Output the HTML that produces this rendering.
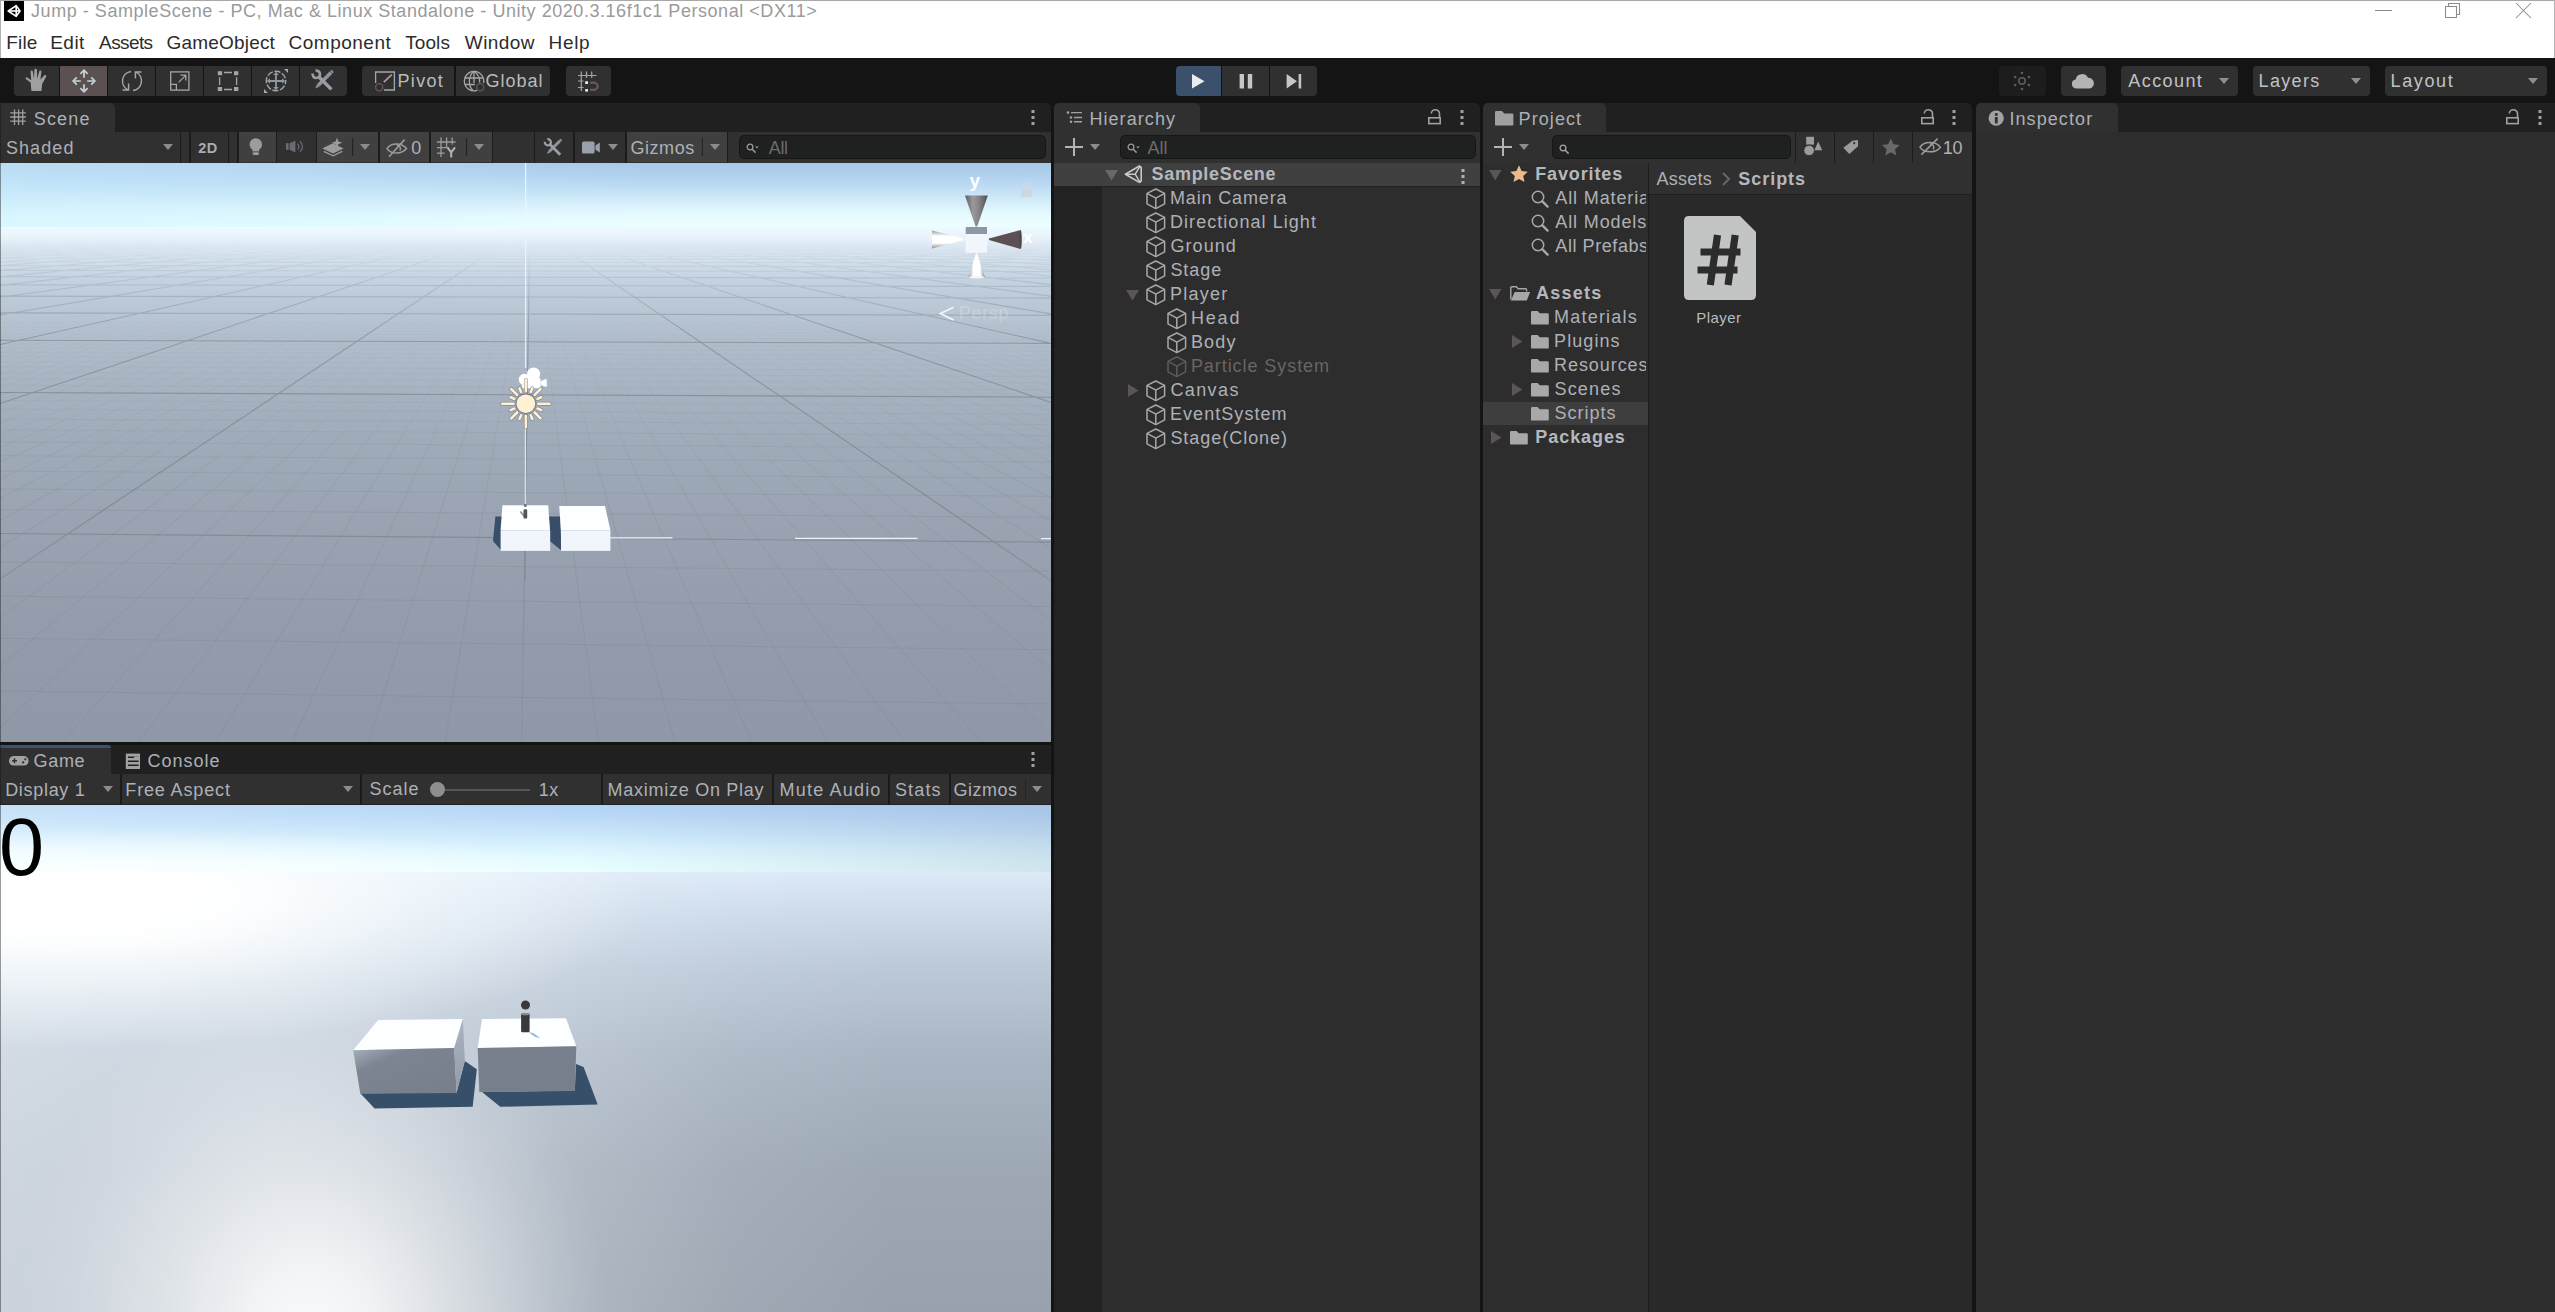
<!DOCTYPE html>
<html><head><meta charset="utf-8"><title>Unity</title>
<style>
*{box-sizing:border-box;margin:0;padding:0}
html,body{width:2555px;height:1312px;overflow:hidden;background:#141414}
body{font-family:"Liberation Sans",sans-serif;font-size:18px;color:#adb1b7;position:relative;letter-spacing:.85px}
.a{position:absolute}
.t{position:absolute;white-space:pre;line-height:24px;height:24px}
.b{font-weight:bold;letter-spacing:.55px}
svg{position:absolute;overflow:visible}
.tab{position:absolute;background:#303030;border-radius:5px 5px 0 0;height:29px}
.strip{position:absolute;background:#202020;height:29px}
.ptb{position:absolute;background:#303030;height:31px}
.btn{position:absolute;background:#303030;height:30px;top:66px}
.sep{position:absolute;width:1px;background:#1b1b1b}
.search{position:absolute;background:#1f2020;border:1px solid #161616;border-radius:5px;height:24px}
</style></head><body>
<div class="a" style="left:0px;top:0px;width:2555px;height:58px;background:#fff;"></div>
<div class="a" style="left:0px;top:0px;width:2555px;height:1px;background:#a8a8a8;"></div>
<div class="a" style="left:0px;top:0px;width:1px;height:58px;background:#b0b0b0;"></div>
<div class="a" style="left:2554px;top:0px;width:1px;height:58px;background:#b4b4b4;"></div>
<div class="a" style="left:4px;top:1px;width:20px;height:20px;background:#000;"></div>
<svg style="left:4px;top:1px" width="20" height="20" viewBox="0 0 20 20"><g fill="none" stroke="#fff" stroke-width="1.6" stroke-linejoin="round"><path d="M4.2 10L12.2 4.6V15.4Z"/><path d="M4.2 10H16"/><path d="M12.2 4.6L16 10L12.2 15.4"/></g></svg>
<div class="t " style="left:31.06px;top:-1px;letter-spacing:0.543px;color:#9a9a9a">Jump - SampleScene - PC, Mac &amp; Linux Standalone - Unity 2020.3.16f1c1 Personal &lt;DX11&gt;</div>
<div class="t " style="left:6.28px;top:31px;font-size:19px;letter-spacing:0.172px;color:#2c2c2c">File</div>
<div class="t " style="left:50.18px;top:31px;font-size:19px;letter-spacing:0.495px;color:#2c2c2c">Edit</div>
<div class="t " style="left:99.12px;top:31px;font-size:19px;letter-spacing:-0.616px;color:#2c2c2c">Assets</div>
<div class="t " style="left:166.6px;top:31px;font-size:19px;letter-spacing:0.178px;color:#2c2c2c">GameObject</div>
<div class="t " style="left:288.6px;top:31px;font-size:19px;letter-spacing:0.487px;color:#2c2c2c">Component</div>
<div class="t " style="left:405.24px;top:31px;font-size:19px;letter-spacing:0.081px;color:#2c2c2c">Tools</div>
<div class="t " style="left:464.84px;top:31px;font-size:19px;letter-spacing:0.423px;color:#2c2c2c">Window</div>
<div class="t " style="left:548.58px;top:31px;font-size:19px;letter-spacing:0.631px;color:#2c2c2c">Help</div>
<svg style="left:2370px;top:0px" width="170" height="24" viewBox="0 0 170 24"><g fill="none" stroke="#8c8c8c" stroke-width="1.05"><path d="M5 10.5H22"/><rect x="75.5" y="6.5" width="11" height="11"/><path d="M78.5 6.5V3.5H89.5V14.5H86.5"/><path d="M146 3L161 18M161 3L146 18"/></g></svg>
<div class="a" style="left:0px;top:58px;width:2555px;height:45px;background:#141414;"></div>
<div class="btn" style="left:14px;width:45px;background:#303030;border-radius:4px 0 0 4px;"></div>
<div class="btn" style="left:60px;width:47px;background:#5a5150;"></div>
<div class="btn" style="left:108px;width:47px;background:#303030;"></div>
<div class="btn" style="left:156px;width:47px;background:#303030;"></div>
<div class="btn" style="left:204px;width:47px;background:#303030;"></div>
<div class="btn" style="left:252px;width:47px;background:#303030;"></div>
<div class="btn" style="left:300px;width:47px;background:#303030;border-radius:0 4px 4px 0;"></div>
<svg style="left:0px;top:0px" width="700" height="110" viewBox="0 0 700 110"><g transform="translate(25,68.4)" fill="#9f9f9f"><path d="M5.6 14.0L0.8 10.6C0 9.8 1 8.4 2.2 9.2L6.2 11.8L5.6 3.4C5.5 1.9 7.6 1.7 7.9 3.2L9 10L9.4 1.6C9.5 0 11.8 0 11.9 1.6L12.2 10L14.2 3C14.6 1.6 16.7 2.1 16.4 3.6L15.4 11.2L19.2 7C20.2 5.9 21.8 7 21.1 8.3L17.2 15.6L16.4 22.6H6.4Z"/></g><g stroke="#c9d2da" stroke-width="1.7" fill="none" stroke-linecap="butt"><path d="M84 70V77.8M84 84.2V92M73 81H80.8M87.2 81H95"/><path d="M80.4 73.8L84 70.2L87.6 73.8M80.4 88.2L84 91.8L87.6 88.2M76.8 77.4L73.2 81L76.8 84.6M91.2 77.4L94.8 81L91.2 84.6"/></g><g stroke="#a4a6a9" stroke-width="1.45" fill="none"><path d="M131 71.5A9.6 9.6 0 0 0 128.2 89.8"/><path d="M133 90.5A9.6 9.6 0 0 0 135.8 72.2"/><path d="M122.5 90H128.6V83.6"/><path d="M141.5 72H135.4V78.4"/></g><g stroke="#a4a6a9" stroke-width="1.3" fill="none"><rect x="170.7" y="71.9" width="18.2" height="18.2"/><path d="M170.7 84.4H176.4V90.1"/><path d="M178.6 82.4L185.4 75.6M180.4 75.2H185.8V80.6"/></g><g fill="#a4a6a9"><rect x="217.8" y="71.2" width="4.3" height="4"/><rect x="234" y="71.2" width="4.3" height="4"/><rect x="217.8" y="87" width="4.3" height="4"/><rect x="234" y="87" width="4.3" height="4"/></g><g stroke="#a4a6a9" stroke-width="1.3"><path d="M224 72.5H232M224 89.5H232M219.6 77.3V85M236.6 77.3V85"/></g><g stroke="#a4a6a9" stroke-width="1.4" fill="none"><circle cx="276" cy="81" r="9.7" stroke-dasharray="6.2 1.6" stroke-dashoffset="3"/></g><g stroke="#8f97a3" stroke-width="1.8"><path d="M276 74V88M269 81H283"/></g><g fill="#8f97a3"><path d="M273.2 75L276 71.8L278.8 75ZM273.2 87L276 90.2L278.8 87ZM270 78.2L266.8 81L270 83.8ZM282 78.2L285.2 81L282 83.8Z"/></g><g fill="#a4a6a9"><path d="M284 69H288V73ZM264 89V93H268Z"/></g><g transform="translate(322.8,80.8) scale(.9)"><g transform="rotate(45)" fill="#8e949e"><rect x="-2" y="-13" width="4" height="20"/><path d="M-2 7H2L0 12Z"/><rect x="-2" y="-15.5" width="4" height="2" rx="1"/></g><g transform="rotate(-45)" fill="#9a9ea4"><rect x="-1.9" y="-6" width="3.8" height="19.5"/><path d="M-2.3 -13.6A4.1 4.1 0 1 0 2.3 -13.6" fill="none" stroke="#9a9ea4" stroke-width="3"/></g></g></svg>
<div class="btn" style="left:362px;width:92px;border-radius:4px 0 0 4px"></div>
<div class="btn" style="left:456px;width:94px;border-radius:0 4px 4px 0"></div>
<div class="t " style="left:397.49px;top:69px;letter-spacing:1.319px;color:#b9bbbf">Pivot</div>
<div class="t " style="left:485.6px;top:69px;letter-spacing:0.987px;color:#b9bbbf">Global</div>
<div class="btn" style="left:566px;width:45px;border-radius:4px"></div>
<svg style="left:0px;top:0px" width="700" height="110" viewBox="0 0 700 110"><g fill="none" stroke="#a6a6a6" stroke-width="1.3"><path d="M375.6 83V72H394.4V90H384"/><path d="M383.8 82.2L391.8 74.6" stroke-width="1.6"/><circle cx="379.2" cy="87.2" r="3.6" stroke="#6a5957"/></g><g fill="none" stroke="#a6a6a6" stroke-width="1.3"><path d="M477 90.4A9.7 9.7 0 1 1 483.6 83"/><path d="M474 71.3C468 76 468 86 473 90.6"/><path d="M474 71.3C479 75 480 80 479.6 82.5"/><path d="M474 71.5V83"/><path d="M464.5 78H483M464.8 84.5H475"/><circle cx="480.3" cy="87.2" r="3.6" stroke="#6a5957"/></g><g fill="none" stroke="#a6a6a6" stroke-width="1.2"><path d="M578 75.5H596.5M578 81H583.5M578 87.5H583.5M581.3 71.5V91M586.5 71.5V78M591.7 71.5V78"/></g><rect x="585.2" y="81.2" width="2.8" height="2.8" fill="#e8e8e8"/><rect x="585.2" y="89" width="2.8" height="2.6" fill="#e8e8e8"/><path d="M590 82.6H594A3.6 3.6 0 0 1 594 89.8H590" fill="none" stroke="#6a5957" stroke-width="2.2"/></svg>
<div class="btn" style="left:1176px;width:45px;background:#3b506b;border-radius:4px 0 0 4px"></div>
<div class="btn" style="left:1222px;width:47px"></div>
<div class="btn" style="left:1270px;width:47px;border-radius:0 4px 4px 0"></div>
<svg style="left:1176px;top:66px" width="141" height="30" viewBox="0 0 141 30"><path d="M16 8V22.5L28.5 15.2Z" fill="#e9eded"/><rect x="63.6" y="8" width="4.4" height="14.5" fill="#c6c6c6"/><rect x="71.8" y="8" width="4.4" height="14.5" fill="#c6c6c6"/><path d="M110.6 8V22.5L121 15.2Z" fill="#c6c6c6"/><rect x="122.6" y="8" width="2.6" height="14.5" fill="#c6c6c6"/></svg>
<div class="btn" style="left:1999px;width:47px;border-radius:4px;background:#1d1d1d"></div>
<div class="btn" style="left:2061px;width:45px;border-radius:4px"></div>
<div class="btn" style="left:2121px;width:117px;border-radius:4px"></div>
<div class="btn" style="left:2253px;width:117px;border-radius:4px"></div>
<div class="btn" style="left:2385px;width:162px;border-radius:4px"></div>
<div class="t " style="left:2128.32px;top:69px;letter-spacing:1.408px;color:#c0c2c6">Account</div>
<div class="t " style="left:2258.59px;top:69px;letter-spacing:1.323px;color:#c0c2c6">Layers</div>
<div class="t " style="left:2390.49px;top:69px;letter-spacing:1.635px;color:#c0c2c6">Layout</div>
<svg style="left:2219px;top:78px" width="10" height="6" viewBox="0 0 10 6"><path d="M0 0H10L5.0 6Z" fill="#8f8f8f"/></svg>
<svg style="left:2351px;top:78px" width="10" height="6" viewBox="0 0 10 6"><path d="M0 0H10L5.0 6Z" fill="#8f8f8f"/></svg>
<svg style="left:2528px;top:78px" width="10" height="6" viewBox="0 0 10 6"><path d="M0 0H10L5.0 6Z" fill="#8f8f8f"/></svg>
<svg style="left:0px;top:0px" width="2555" height="110" viewBox="0 0 2555 110"><circle cx="2022" cy="81" r="3.2" fill="none" stroke="#5c5c5c" stroke-width="1.6"/><circle cx="2022.0" cy="73.0" r="1.35" fill="#5c5c5c"/><circle cx="2028.9" cy="77.0" r="1.35" fill="#5c5c5c"/><circle cx="2028.9" cy="85.0" r="1.35" fill="#5c5c5c"/><circle cx="2022.0" cy="89.0" r="1.35" fill="#5c5c5c"/><circle cx="2015.1" cy="85.0" r="1.35" fill="#5c5c5c"/><circle cx="2015.1" cy="77.0" r="1.35" fill="#5c5c5c"/><path d="M2076 88.5A4.6 4.6 0 0 1 2075.6 79.4A6.6 6.6 0 0 1 2088 77.8A5.4 5.4 0 0 1 2089.4 88.5Z" fill="#b4b4b4"/></svg>
<div class="strip" style="left:0;top:103px;width:1051px;border-radius:0 5px 0 0"></div>
<div class="tab" style="left:0;top:103px;width:115px;border-radius:0 5px 0 0"></div>
<svg style="left:0px;top:100px" width="40" height="32" viewBox="0 0 40 32"><g stroke="#a0a0a0" stroke-width="1.3"><path d="M14.5 9.4V25M18.6 9.4V25M22.7 9.4V25M10.2 12.9H25.8M10.2 17H25.8M10.2 21.1H25.8"/></g></svg>
<div class="t " style="left:33.78px;top:106.5px;letter-spacing:1.159px;">Scene</div>
<svg style="left:1030.5px;top:110px" width="4" height="16" viewBox="0 0 4 16"><rect x="0.5" y="0" width="3" height="3" fill="#a0a0a0"/><rect x="0.5" y="6" width="3" height="3" fill="#a0a0a0"/><rect x="0.5" y="12" width="3" height="3" fill="#a0a0a0"/></svg>
<div class="ptb" style="left:0;top:132px;width:1051px"></div>
<div class="t " style="left:5.88px;top:135.5px;letter-spacing:1.105px;">Shaded</div>
<svg style="left:163px;top:144px" width="10" height="6" viewBox="0 0 10 6"><path d="M0 0H10L5.0 6Z" fill="#8c8c8c"/></svg>
<div class="a" style="left:180px;top:132px;width:1px;height:31px;background:#1b1b1b;"></div>
<div class="a" style="left:189px;top:132px;width:2px;height:31px;background:#1b1b1b;"></div>
<div class="a" style="left:228px;top:132px;width:1px;height:31px;background:#1b1b1b;"></div>
<div class="a" style="left:237px;top:132px;width:2px;height:31px;background:#1b1b1b;"></div>
<div class="a" style="left:239px;top:132px;width:37px;height:30px;background:#404040;"></div>
<div class="a" style="left:317px;top:132px;width:61px;height:30px;background:#404040;"></div>
<div class="a" style="left:380px;top:132px;width:49px;height:30px;background:#404040;"></div>
<div class="a" style="left:431px;top:132px;width:61px;height:30px;background:#404040;"></div>
<div class="a" style="left:627px;top:132px;width:100px;height:30px;background:#404040;"></div>
<div class="a" style="left:276px;top:132px;width:1px;height:31px;background:#1b1b1b;"></div>
<div class="a" style="left:316px;top:132px;width:1px;height:31px;background:#1b1b1b;"></div>
<div class="a" style="left:378px;top:132px;width:1px;height:31px;background:#1b1b1b;"></div>
<div class="a" style="left:379px;top:132px;width:1px;height:31px;background:#1b1b1b;"></div>
<div class="a" style="left:429px;top:132px;width:1px;height:31px;background:#1b1b1b;"></div>
<div class="a" style="left:430px;top:132px;width:1px;height:31px;background:#1b1b1b;"></div>
<div class="a" style="left:492px;top:132px;width:1px;height:31px;background:#1b1b1b;"></div>
<div class="a" style="left:534px;top:132px;width:1px;height:31px;background:#1b1b1b;"></div>
<div class="a" style="left:573px;top:132px;width:1px;height:31px;background:#1b1b1b;"></div>
<div class="a" style="left:574px;top:132px;width:1px;height:31px;background:#1b1b1b;"></div>
<div class="a" style="left:625px;top:132px;width:1px;height:31px;background:#1b1b1b;"></div>
<div class="a" style="left:626px;top:132px;width:1px;height:31px;background:#1b1b1b;"></div>
<div class="a" style="left:727px;top:132px;width:1px;height:31px;background:#1b1b1b;"></div>
<div class="t " style="left:198.36px;top:136px;font-size:14.5px;font-weight:bold;letter-spacing:0.335px;color:#a8abb0">2D</div>
<svg style="left:0px;top:0px" width="1060" height="170" viewBox="0 0 1060 170"><circle cx="255.8" cy="144.4" r="6.2" fill="#9c9c9c"/><path d="M252.4 148.6H259.2V151.4H252.4Z" fill="#9c9c9c"/><rect x="252.6" y="152.2" width="6.4" height="2.8" rx="1.3" fill="#9c9c9c"/><rect x="286" y="143.2" width="2.6" height="6.6" fill="#6c6a72"/><path d="M289.6 143.2L295.4 140.6V152.4L289.6 149.8Z" fill="#6c6a72"/><path d="M297.6 143.8A3.6 3.6 0 0 1 297.6 149.2" fill="none" stroke="#6c6a72" stroke-width="1.3"/><path d="M300 141.4A6.6 6.6 0 0 1 300 151.6" fill="none" stroke="#6c6a72" stroke-width="1.3"/><path d="M323.8 148.4L333 144L342.2 148.4L333 152.8Z" fill="#9c9c9c" stroke="#9c9c9c" stroke-width="1.2"/><path d="M323.8 151.4L333 155.8L342.2 151.4" fill="none" stroke="#9c9c9c" stroke-width="1.4"/><path d="M337 137.6L338.4 141.4L342.2 142.8L338.4 144.2L337 148L335.6 144.2L331.8 142.8L335.6 141.4Z" fill="#9c9c9c"/><path d="M352.6 138V156" stroke="#242424" stroke-width="1.2"/><path d="M387 148.6C391 142.6 401.6 142.6 406.6 148.6C401.6 154.6 391 154.6 387 148.6Z" fill="none" stroke="#9c9c9c" stroke-width="1.5"/><path d="M389 156.8L404.6 139.6" stroke="#9c9c9c" stroke-width="1.6"/><path d="M396.6 145.4A3.3 3.3 0 0 1 399.8 150.6" fill="none" stroke="#9c9c9c" stroke-width="1.4"/><g stroke="#9c9c9c" stroke-width="1.3" fill="none"><path d="M437 142H455.6M437 147.6H447M437 153.2H444.6M441 137.6V157M446.6 137.6V148M452.2 137.6V144.4"/></g><path d="M447.4 147.4L451.2 152.4L455 147.4M451.2 152.4V157.4" fill="none" stroke="#b4b4b4" stroke-width="2"/><path d="M466.5 138V156" stroke="#242424" stroke-width="1.2"/><g transform="translate(553.2,147.6) scale(.74)"><g transform="rotate(45)" fill="#8e949e"><rect x="-2" y="-13" width="4" height="20"/><path d="M-2 7H2L0 12Z"/><rect x="-2" y="-15.5" width="4" height="2" rx="1"/></g><g transform="rotate(-45)" fill="#9a9ea4"><rect x="-1.9" y="-6" width="3.8" height="19.5"/><path d="M-2.3 -13.6A4.1 4.1 0 1 0 2.3 -13.6" fill="none" stroke="#9a9ea4" stroke-width="3"/></g></g><rect x="582" y="141.6" width="12.6" height="12" rx="1.6" fill="#9aa0aa"/><path d="M595.4 145.4L599.8 142.6V152.6L595.4 149.8Z" fill="#9aa0aa"/><path d="M702.4 138V156" stroke="#262626" stroke-width="1.2"/></svg>
<svg style="left:359.6px;top:144px" width="10" height="6" viewBox="0 0 10 6"><path d="M0 0H10L5.0 6Z" fill="#8c8c8c"/></svg>
<svg style="left:473.9px;top:144px" width="10" height="6" viewBox="0 0 10 6"><path d="M0 0H10L5.0 6Z" fill="#8c8c8c"/></svg>
<svg style="left:608px;top:144px" width="10" height="6" viewBox="0 0 10 6"><path d="M0 0H10L5.0 6Z" fill="#8c8c8c"/></svg>
<svg style="left:710px;top:144px" width="10" height="6" viewBox="0 0 10 6"><path d="M0 0H10L5.0 6Z" fill="#8c8c8c"/></svg>
<div class="t " style="left:411.34px;top:135.5px;letter-spacing:0px;">0</div>
<div class="t " style="left:630.5px;top:135.5px;letter-spacing:0.541px;">Gizmos</div>
<div class="search" style="left:739px;top:135px;width:307px"></div>
<svg style="left:746px;top:143px" width="13" height="10" viewBox="0 0 13 10"><circle cx="4" cy="4" r="2.9" fill="none" stroke="#9a9a9a" stroke-width="1.3"/><path d="M6.2 6.2L9.6 9.6" stroke="#9a9a9a" stroke-width="1.5"/><path d="M9.2 3.6H12.6L10.9 5.6Z" fill="#9a9a9a"/></svg>
<div class="t " style="left:768.82px;top:135.5px;letter-spacing:-0.392px;color:#6b6b6b">All</div>
<svg style="left:0;top:163px" width="1051" height="579" viewBox="0 0 1051 579"><defs>
<linearGradient id="sky" x1="0" y1="0" x2="0" y2="1">
<stop offset="0" stop-color="#a8c8e8"/><stop offset=".021" stop-color="#b0d0ee"/><stop offset=".038" stop-color="#bbdaf2"/><stop offset=".057" stop-color="#cbe6f7"/><stop offset=".076" stop-color="#dcf3fc"/><stop offset=".093" stop-color="#e8fcff"/><stop offset=".109" stop-color="#ebffff"/>
<stop offset=".114" stop-color="#eef8ff"/><stop offset=".133" stop-color="#e6f1fb"/><stop offset=".15" stop-color="#dde9f5"/><stop offset=".171" stop-color="#d2dfec"/><stop offset=".202" stop-color="#c4d3e1"/><stop offset=".237" stop-color="#bccad8"/><stop offset=".306" stop-color="#b1bdcb"/><stop offset=".41" stop-color="#a6b1bf"/><stop offset=".48" stop-color="#a0abb9"/><stop offset=".62" stop-color="#99a3b1"/><stop offset=".8" stop-color="#939cab"/><stop offset="1" stop-color="#8f98a7"/>
</linearGradient>
<linearGradient id="skyl" x1="0" y1="0" x2="1" y2="0"><stop offset="0" stop-color="#caf0ff" stop-opacity=".5"/><stop offset=".3" stop-color="#caf0ff" stop-opacity=".32"/><stop offset=".62" stop-color="#caf0ff" stop-opacity="0"/></linearGradient>
<linearGradient id="gfade" gradientUnits="userSpaceOnUse" x1="0" y1="130" x2="0" y2="330"><stop offset="0" stop-color="#fff" stop-opacity="0"/><stop offset="1" stop-color="#fff" stop-opacity="1"/></linearGradient>
<mask id="gm"><rect x="0" y="0" width="1051" height="579" fill="url(#gfade)"/></mask>
<linearGradient id="gfade2" gradientUnits="userSpaceOnUse" x1="0" y1="72" x2="0" y2="520"><stop offset="0" stop-color="#fff" stop-opacity="0"/><stop offset=".04" stop-color="#fff" stop-opacity=".12"/><stop offset=".12" stop-color="#fff" stop-opacity=".45"/><stop offset=".24" stop-color="#fff" stop-opacity=".95"/><stop offset=".6" stop-color="#fff" stop-opacity=".9"/><stop offset=".8" stop-color="#fff" stop-opacity=".5"/><stop offset="1" stop-color="#fff" stop-opacity=".26"/></linearGradient>
<mask id="gm2"><rect x="0" y="0" width="1051" height="579" fill="url(#gfade2)"/></mask>
<linearGradient id="cg" x1="0" y1="0" x2="1" y2="0"><stop offset="0" stop-color="#5c5c60"/><stop offset=".35" stop-color="#9a9a9e"/><stop offset=".6" stop-color="#858589"/><stop offset="1" stop-color="#4e4e52"/></linearGradient>
<linearGradient id="cw" x1="0" y1="0" x2="0" y2="1"><stop offset="0" stop-color="#9a9a9a"/><stop offset=".3" stop-color="#fff"/><stop offset=".7" stop-color="#fff"/><stop offset="1" stop-color="#8a8a8a"/></linearGradient>
<linearGradient id="cwv" x1="0" y1="0" x2="1" y2="0"><stop offset="0" stop-color="#9a9a9a"/><stop offset=".3" stop-color="#fff"/><stop offset=".7" stop-color="#fff"/><stop offset="1" stop-color="#8a8a8a"/></linearGradient>
</defs><rect x="0" y="0" width="1051" height="579" fill="url(#sky)"/><rect x="0" y="0" width="1051" height="64" fill="url(#skyl)"/><g mask="url(#gm)"><path d="M0 528.0L1051 541.0M0 475.3L1051 486.7M0 433.2L1051 443.5M0 399.0L1051 408.3M0 346.5L1051 354.4M0 326.0L1051 333.3M0 308.2L1051 315.1M0 292.7L1051 299.1M0 279.1L1051 285.1M0 266.9L1051 272.6M0 256.1L1051 261.5M0 246.3L1051 251.4M0 237.5L1051 242.4M0 222.2L1051 226.7M0 215.5L1051 219.8M0 209.4L1051 213.5M0 203.7L1051 207.6M0 198.5L1051 202.2M0 193.6L1051 197.2M0 189.1L1051 192.6M0 184.8L1051 188.2M0 180.9L1051 184.2M0 173.7L1051 176.8M0 170.4L1051 173.4M0 167.3L1051 170.2M0 164.4L1051 167.2M0 161.7L1051 164.4M0 159.1L1051 161.7M6.5 158.0L0.0 159.2M20.6 158.0L0.0 161.8M34.7 158.0L0.0 164.7M48.8 158.0L0.0 167.6M62.9 158.0L0.0 170.8M77.0 158.0L0.0 174.2M91.1 158.0L0.0 177.7M119.4 158.0L0.0 185.6M133.5 158.0L0.0 190.0M147.6 158.0L0.0 194.7M161.7 158.0L0.0 199.7M175.8 158.0L0.0 205.1M189.9 158.0L0.0 211.0M204.0 158.0L0.0 217.5M218.1 158.0L0.0 224.4M232.2 158.0L0.0 232.1M260.4 158.0L0.0 249.8M274.5 158.0L0.0 260.1M288.7 158.0L0.0 271.6M302.8 158.0L0.0 284.6M316.9 158.0L0.0 299.2M331.0 158.0L0.0 316.0M345.1 158.0L0.0 335.3M359.2 158.0L0.0 357.8M373.3 158.0L0.0 384.3M401.5 158.0L0.0 454.9M415.6 158.0L0.0 503.2M429.7 158.0L0.0 565.1M443.8 158.0L62.0 579.0M457.9 158.0L138.6 579.0M472.1 158.0L215.2 579.0M486.2 158.0L291.9 579.0M500.3 158.0L368.5 579.0M514.4 158.0L445.1 579.0M542.6 158.0L598.4 579.0M556.7 158.0L675.0 579.0M570.8 158.0L751.6 579.0M584.9 158.0L828.2 579.0M599.0 158.0L904.9 579.0M613.1 158.0L981.5 579.0M627.2 158.0L1051.0 572.0M641.3 158.0L1051.0 507.5M655.4 158.0L1051.0 457.5M683.7 158.0L1051.0 385.1M697.8 158.0L1051.0 358.0M711.9 158.0L1051.0 335.1M726.0 158.0L1051.0 315.5M740.1 158.0L1051.0 298.6M754.2 158.0L1051.0 283.8M768.3 158.0L1051.0 270.7M782.4 158.0L1051.0 259.1M796.5 158.0L1051.0 248.7M824.7 158.0L1051.0 230.9M838.8 158.0L1051.0 223.3M853.0 158.0L1051.0 216.3M867.1 158.0L1051.0 209.8M881.2 158.0L1051.0 203.9M895.3 158.0L1051.0 198.5M909.4 158.0L1051.0 193.5M923.5 158.0L1051.0 188.8M937.6 158.0L1051.0 184.4M965.8 158.0L1051.0 176.6M979.9 158.0L1051.0 173.0M994.0 158.0L1051.0 169.7M1008.1 158.0L1051.0 166.5M1022.2 158.0L1051.0 163.6M1036.3 158.0L1051.0 160.7M1050.5 158.0L1051.0 158.1" stroke="#59606b" stroke-opacity=".12" stroke-width="1" fill="none"/></g><g mask="url(#gm2)"><path d="M0 370.5L1051 379.1M0 229.5L1051 234.2M0 177.2L1051 180.4M0 149.9L1051 152.3M0 133.1L1051 135.1M0 121.8L1051 123.4M0 113.6L1051 115.0M0 107.4L1051 108.6M0 102.6L1051 103.7M0 98.7L1051 99.7M0 95.5L1051 96.4M0 92.8L1051 93.6M0 90.6L1051 91.3M0 88.6L1051 89.3M0 86.9L1051 87.6M0 85.4L1051 86.1M0 84.1L1051 84.7M0 83.0L1051 83.5M0 81.9L1051 82.5M0 81.0L1051 81.5M0 80.1L1051 80.6M0 79.4L1051 79.8M0 78.7L1051 79.1M0 78.0L1051 78.4M0 77.4L1051 77.8M0 76.9L1051 77.3M0 76.4L1051 76.7M0 75.9L1051 76.2M0 75.4L1051 75.8M0 75.0L1051 75.4M13.0 75.0L0.0 75.3M30.8 75.0L0.0 75.7M48.7 75.0L0.0 76.2M66.5 75.0L0.0 76.7M84.3 75.0L0.0 77.3M102.1 75.0L0.0 77.9M119.9 75.0L0.0 78.5M137.8 75.0L0.0 79.2M155.6 75.0L0.0 80.0M173.4 75.0L0.0 80.8M191.2 75.0L0.0 81.8M209.0 75.0L0.0 82.8M226.9 75.0L0.0 84.0M244.7 75.0L0.0 85.3M262.5 75.0L0.0 86.8M280.3 75.0L0.0 88.5M298.1 75.0L0.0 90.4M316.0 75.0L0.0 92.7M333.8 75.0L0.0 95.4M351.6 75.0L0.0 98.7M369.4 75.0L0.0 102.6M387.2 75.0L0.0 107.6M405.1 75.0L0.0 113.9M422.9 75.0L0.0 122.4M440.7 75.0L0.0 134.2M458.5 75.0L0.0 152.0M476.3 75.0L0.0 181.5M494.2 75.0L0.0 240.5M512.0 75.0L0.0 416.1M529.8 75.0L521.7 579.0M547.6 75.0L1051.0 417.7M565.4 75.0L1051.0 239.4M583.3 75.0L1051.0 180.4M601.1 75.0L1051.0 150.9M618.9 75.0L1051.0 133.3M636.7 75.0L1051.0 121.6M654.5 75.0L1051.0 113.2M672.4 75.0L1051.0 106.9M690.2 75.0L1051.0 102.0M708.0 75.0L1051.0 98.1M725.8 75.0L1051.0 94.9M743.6 75.0L1051.0 92.3M761.5 75.0L1051.0 90.0M779.3 75.0L1051.0 88.1M797.1 75.0L1051.0 86.4M814.9 75.0L1051.0 84.9M832.7 75.0L1051.0 83.7M850.6 75.0L1051.0 82.5M868.4 75.0L1051.0 81.5M886.2 75.0L1051.0 80.6M904.0 75.0L1051.0 79.7M921.8 75.0L1051.0 79.0M939.7 75.0L1051.0 78.3M957.5 75.0L1051.0 77.6M975.3 75.0L1051.0 77.0M993.1 75.0L1051.0 76.5M1010.9 75.0L1051.0 76.0M1028.8 75.0L1051.0 75.5M1046.6 75.0L1051.0 75.1" stroke="#505762" stroke-opacity=".38" stroke-width="1.1" fill="none"/></g><path d="M610 374.79999999999995H672.6M795 375.29999999999995H917.4M1041 375.70000000000005H1051" stroke="#eef2f6" stroke-width="1.2"/><path d="M525.6 0V205" stroke="#f2f6fa" stroke-width="1.3" stroke-opacity=".85"/><path d="M525.4 263V343" stroke="#e6e9ee" stroke-width="1.3" stroke-opacity=".9"/><path d="M525.4 387V417" stroke="#7b838f" stroke-width="1" stroke-opacity=".6"/><path d="M495.4 353.5H503L501.4 387.6L493 378Z" fill="#394e68"/><path d="M549 353.5H560L561.5 387.6L550 378.20000000000005Z" fill="#394e68"/><path d="M502.4 342.2H548.2L550 367.29999999999995H500.6Z" fill="#fdfeff"/><rect x="500.6" y="367.29999999999995" width="49.6" height="20.6" fill="#f1f6fc"/><path d="M559.2 343H605L610.4 367.29999999999995H561Z" fill="#fdfeff"/><rect x="561" y="367.29999999999995" width="49.4" height="20.6" fill="#f1f6fc"/><path d="M520.5 348.5L524 353" stroke="#7d92b0" stroke-width="1.6"/><circle cx="525.3" cy="342.4" r="1.6" fill="#777"/><rect x="523.5" y="346.2" width="3.7" height="9.4" rx="1.2" fill="#555558"/><g fill="#fff" stroke="#b9c2cc" stroke-width=".5"><circle cx="524.3" cy="216.39999999999998" r="5.6"/><circle cx="533.6" cy="211" r="6.6"/><rect x="522" y="215" width="18.6" height="10.2" rx="1.5"/><path d="M540.4 218.60000000000002L543 217Q546.8 215.2 547 216.8V223.2Q546.8 224.8 543 223L540.4 221.8Z"/></g><g fill="#fff"><circle cx="524.3" cy="216.39999999999998" r="5.3"/><circle cx="533.6" cy="211" r="6.3"/><rect x="522.4" y="215.3" width="18" height="9.6" rx="1.5"/></g><path d="M538.3 240.7L549.5 240.7M537.5 245.5L541.2 247.1M534.7 249.5L540.5 255.3M530.7 252.3L532.3 256.0M525.9 253.1L525.9 264.3M521.1 252.3L519.5 256.0M517.1 249.5L511.3 255.3M514.3 245.5L510.6 247.1M513.5 240.7L502.3 240.7M514.3 235.9L510.6 234.3M517.1 231.9L511.3 226.1M521.1 229.1L519.5 225.4M525.9 228.3L525.9 217.1M530.7 229.1L532.3 225.4M534.7 231.9L540.5 226.1M537.5 235.9L541.2 234.3" stroke="#6e7078" stroke-width="4" stroke-linecap="round" stroke-opacity=".6"/><circle cx="525.9" cy="240.7" r="10.5" fill="#6e7078" fill-opacity=".65"/><path d="M538.3 240.7L549.5 240.7M537.5 245.5L541.2 247.1M534.7 249.5L540.5 255.3M530.7 252.3L532.3 256.0M525.9 253.1L525.9 264.3M521.1 252.3L519.5 256.0M517.1 249.5L511.3 255.3M514.3 245.5L510.6 247.1M513.5 240.7L502.3 240.7M514.3 235.9L510.6 234.3M517.1 231.9L511.3 226.1M521.1 229.1L519.5 225.4M525.9 228.3L525.9 217.1M530.7 229.1L532.3 225.4M534.7 231.9L540.5 226.1M537.5 235.9L541.2 234.3" stroke="#fff2d2" stroke-width="2.6" stroke-linecap="round"/><circle cx="525.9" cy="240.7" r="9.3" fill="#fff2d2"/><path d="M965 32.400000000000006H987.8L977.2 63.599999999999994H975.6Z" fill="url(#cg)"/><path d="M932 67.6V85.5L963.4 77V75.6Z" fill="url(#cw)"/><path d="M1020.6 67V86L989 77V75.6Z" fill="#5b5152"/><ellipse cx="1020.6" cy="76.5" rx="1.2" ry="9.5" fill="#4e4546"/><path d="M968.5 114.30000000000001H985L977 90.30000000000001H976Z" fill="url(#cwv)"/><ellipse cx="976.7" cy="114.30000000000001" rx="8.2" ry="1.2" fill="#f4f4f4"/><rect x="965.7" y="64" width="21.3" height="7" fill="#9197a2"/><rect x="965.7" y="71" width="21.3" height="18.8" fill="#f1f6fc"/><g opacity=".85"><rect x="1021.4" y="25.599999999999994" width="10.8" height="8.4" fill="#cfd5dc"/><path d="M1024.4 25.599999999999994V23.400000000000006A3 3 0 0 1 1030.4 23.400000000000006" fill="none" stroke="#d2d8de" stroke-width="1.4"/></g><path d="M953.6 144.2L940.4 150.60000000000002L953.6 157" fill="none" stroke="#f4f6f8" stroke-width="1.7"/></svg>
<div class="t b" style="left:969.4px;top:169px;color:#fff;font-size:19px;letter-spacing:0">y</div>
<div class="t b" style="left:1023px;top:226px;color:#fff;font-size:17px;letter-spacing:0">x</div>
<div class="t" style="left:959px;top:301px;color:#dfe3e8;opacity:.4;font-size:18px;letter-spacing:.6px">Persp</div>
<div class="strip" style="left:0;top:745px;width:1051px"></div>
<div class="tab" style="left:0;top:745px;width:111px;border-radius:0 5px 0 0"></div>
<div class="a" style="left:0px;top:745px;width:111px;height:3px;background:#3a5374;border-radius:0 4px 0 0"></div>
<svg style="left:0px;top:745px" width="160" height="30" viewBox="0 0 160 30"><rect x="9" y="11" width="19.6" height="9.6" rx="4.8" fill="#a2a2a2"/><path d="M12 15.8H17M14.5 13.3V18.3" stroke="#303030" stroke-width="1.5"/><circle cx="23.1" cy="17.4" r="1.15" fill="#303030"/><circle cx="25.3" cy="14.3" r="1.15" fill="#303030"/><rect x="125.8" y="8.6" width="14.2" height="15.4" fill="#a2a2a2"/><path d="M128 12.3H138.6M128 16.3H138.6M128 20.3H138.6" stroke="#202020" stroke-width="1.5"/><path d="M134 11.5H140V13.1H134Z" fill="#a2a2a2"/></svg>
<div class="t " style="left:33.6px;top:749px;letter-spacing:0.671px;">Game</div>
<div class="t " style="left:147.6px;top:749px;letter-spacing:0.969px;">Console</div>
<svg style="left:1030.5px;top:751.5px" width="4" height="16" viewBox="0 0 4 16"><rect x="0.5" y="0" width="3" height="3" fill="#a0a0a0"/><rect x="0.5" y="6" width="3" height="3" fill="#a0a0a0"/><rect x="0.5" y="12" width="3" height="3" fill="#a0a0a0"/></svg>
<div class="ptb" style="left:0;top:774px;width:1051px;height:30px"></div>
<div class="a" style="left:120px;top:774px;width:2px;height:30px;background:#1b1b1b;"></div>
<div class="a" style="left:360px;top:774px;width:2px;height:30px;background:#1b1b1b;"></div>
<div class="a" style="left:601px;top:774px;width:2px;height:30px;background:#1b1b1b;"></div>
<div class="a" style="left:772px;top:774px;width:2px;height:30px;background:#1b1b1b;"></div>
<div class="a" style="left:888px;top:774px;width:2px;height:30px;background:#1b1b1b;"></div>
<div class="a" style="left:949px;top:774px;width:2px;height:30px;background:#1b1b1b;"></div>
<div class="a" style="left:1025px;top:779px;width:1px;height:20px;background:#232323;"></div>
<div class="t " style="left:5.19px;top:777.5px;letter-spacing:0.688px;">Display 1</div>
<svg style="left:103px;top:786px" width="10" height="6" viewBox="0 0 10 6"><path d="M0 0H10L5.0 6Z" fill="#8c8c8c"/></svg>
<div class="t " style="left:125.29px;top:777.5px;letter-spacing:0.858px;">Free Aspect</div>
<svg style="left:342.5px;top:786px" width="10" height="6" viewBox="0 0 10 6"><path d="M0 0H10L5.0 6Z" fill="#8c8c8c"/></svg>
<div class="t " style="left:369.48px;top:777.0px;letter-spacing:1.034px;">Scale</div>
<div class="a" style="left:437px;top:788.5px;width:93px;height:2px;background:#555;"></div>
<div class="a" style="left:429.5px;top:781.5px;width:15.5px;height:15.5px;border-radius:50%;background:#8e8e8e"></div>
<div class="t " style="left:538.7px;top:777.5px;letter-spacing:0.612px;">1x</div>
<div class="t " style="left:607.59px;top:777.5px;letter-spacing:0.729px;">Maximize On Play</div>
<div class="t " style="left:779.59px;top:777.5px;letter-spacing:1.19px;">Mute Audio</div>
<div class="t " style="left:894.98px;top:777.5px;letter-spacing:1.132px;">Stats</div>
<div class="t " style="left:953.4px;top:777.5px;letter-spacing:0.541px;">Gizmos</div>
<svg style="left:1032px;top:786px" width="10" height="6" viewBox="0 0 10 6"><path d="M0 0H10L5.0 6Z" fill="#8c8c8c"/></svg>
<div class="a" style="left:0;top:804px;width:1051px;height:508px;background:linear-gradient(to bottom, #b2d3f5 0, #bcdbf8 15px, #cbe7fb 30px, #dbf4fe 45px, #e5fcff 58px, #e8ffff 67.5px, #dce9f7 68px, #cddbea 108px, #bdcad9 160px, #aab6c4 248px, #9ea8b5 367px, #98a2ae 508px)"></div>
<div class="a" style="left:0;top:804px;width:1051px;height:68px;background:linear-gradient(to right, rgba(240,252,255,.3) 0, rgba(240,252,255,.12) 35%, rgba(140,160,190,0) 55%, rgba(120,140,175,.22) 100%)"></div>
<div class="a" style="left:0;top:804px;width:1051px;height:68px;background:radial-gradient(ellipse 560px 46px at 60px 70px, rgba(255,255,255,.85) 0, rgba(255,255,255,.5) 50%, rgba(255,255,255,0) 100%)"></div>
<div class="a" style="left:0;top:872px;width:1051px;height:440px;background:linear-gradient(to right, rgba(244,250,255,.55) 0, rgba(244,250,255,.46) 25%, rgba(244,250,255,.3) 48%, rgba(244,250,255,.08) 70%, rgba(244,250,255,0) 85%)"></div>
<div class="a" style="left:0;top:872px;width:1051px;height:440px;background:radial-gradient(ellipse 300px 370px at 313px 472px, rgba(255,255,255,.95) 0, rgba(255,255,255,.78) 22%, rgba(255,255,255,.42) 52%, rgba(255,255,255,.13) 80%, rgba(255,255,255,0) 100%),radial-gradient(ellipse 570px 150px at 80px 26px, rgba(255,255,255,1) 0, rgba(255,255,255,.95) 28%, rgba(250,254,255,.5) 62%, rgba(250,254,255,0) 100%)"></div>
<div class="a" style="left:0px;top:804px;width:1051px;height:1px;background:#222;"></div>
<svg style="left:0;top:804px" width="1051" height="508" viewBox="0 0 1051 508"><defs><linearGradient id="gf" x1="0" y1="0" x2="1" y2="1"><stop offset="0" stop-color="#a8b0bd"/><stop offset=".28" stop-color="#7d8492"/><stop offset="1" stop-color="#767d8b"/></linearGradient><linearGradient id="gs" x1="0" y1="0" x2="0" y2="1"><stop offset="0" stop-color="#aab4c0"/><stop offset="1" stop-color="#929caa"/></linearGradient><filter id="bl" x="-10%" y="-10%" width="120%" height="120%"><feGaussianBlur stdDeviation=".7"/></filter></defs><g filter="url(#bl)"><path d="M360.3 289.20000000000005L456.6 288.5L464.8 257L476.8 265.20000000000005L472.7 302.79999999999995L374.6 304.5999999999999Z" fill="#384f6b"/><path d="M482 288L574.8 286.5999999999999L576 260L583.6 262.9000000000001L597.7 300.5L500.2 302.79999999999995Z" fill="#384f6b"/></g><path d="M378.1 215.89999999999998L462.9 215.10000000000002L454.2 244.0999999999999L353.2 246.20000000000005Z" fill="#fdfeff"/><path d="M353.2 246.20000000000005L454.2 244.0999999999999L456.6 289L360.3 289.70000000000005Z" fill="url(#gf)"/><path d="M462.9 215.10000000000002L454.2 244.0999999999999L456.6 289L464.8 257Z" fill="url(#gs)"/><path d="M482 215.10000000000002L566 214.20000000000005L576.3 242.29999999999995L477.7 243.9000000000001Z" fill="#fdfeff"/><path d="M477.7 243.9000000000001L576.3 242.29999999999995L574.8 287L479.3 288.0999999999999Z" fill="#777e8c"/><path d="M528.6 228.20000000000005L533 229L540.4 234.20000000000005L535 232.79999999999995Z" fill="#8fb2dc" filter="url(#bl)"/><circle cx="525.5" cy="201" r="4.5" fill="#3a3a3c"/><rect x="521.1" y="209.5" width="8.5" height="18.8" rx="1.2" fill="#3a3a3c"/><ellipse cx="525.35" cy="210.20000000000005" rx="4" ry="1" fill="#8a8d92"/></svg>
<div class="a" style="left:-1px;top:801px;font-size:81px;line-height:92px;color:#000;letter-spacing:0">0</div>
<div class="strip" style="left:1054px;top:103px;width:426px;border-radius:5px 5px 0 0"></div>
<div class="tab" style="left:1054px;top:103px;width:146px"></div>
<div class="t " style="left:1089.39px;top:106.5px;letter-spacing:1.08px;">Hierarchy</div>
<svg style="left:1428px;top:109px" width="13" height="16" viewBox="0 0 13 16"><path d="M3.3 4.6V4.4A4.1 3.7 0 0 1 11.5 4.4V8.6" fill="none" stroke="#a0a0a0" stroke-width="1.6"/><rect x="0.8" y="8.8" width="11.4" height="5.8" fill="none" stroke="#a0a0a0" stroke-width="1.6"/></svg>
<svg style="left:1459.5px;top:110px" width="4" height="16" viewBox="0 0 4 16"><rect x="0.5" y="0" width="3" height="3" fill="#a0a0a0"/><rect x="0.5" y="6" width="3" height="3" fill="#a0a0a0"/><rect x="0.5" y="12" width="3" height="3" fill="#a0a0a0"/></svg>
<div class="ptb" style="left:1054px;top:132px;width:426px"></div>
<div class="a" style="left:1054px;top:163px;width:426px;height:1149px;background:#2d2d2d;"></div>
<div class="a" style="left:1054px;top:163px;width:48px;height:1149px;background:#222;"></div>
<div class="a" style="left:1054px;top:163px;width:426px;height:23px;background:#404040;"></div>
<div class="a" style="left:1054px;top:186px;width:426px;height:1px;background:#222;"></div>
<svg style="left:1060px;top:105px" width="30" height="24" viewBox="0 0 30 24"><g fill="#a2a2a2"><circle cx="8" cy="7.6" r="1.3"/><circle cx="11" cy="12.5" r="1.3"/><circle cx="11" cy="16.8" r="1.3"/></g><path d="M11 7.6H22M14 12.5H22M14 16.8H22" stroke="#a2a2a2" stroke-width="1.4"/></svg>
<svg style="left:1065px;top:137.5px" width="18" height="18" viewBox="0 0 18 18"><path d="M9 0V18M0 9H18" stroke="#b4b4b4" stroke-width="2"/></svg>
<svg style="left:1090px;top:144px" width="10" height="6" viewBox="0 0 10 6"><path d="M0 0H10L5.0 6Z" fill="#8c8c8c"/></svg>
<div class="search" style="left:1120px;top:135px;width:356px"></div>
<svg style="left:1126.5px;top:143px" width="13" height="10" viewBox="0 0 13 10"><circle cx="4" cy="4" r="2.9" fill="none" stroke="#9a9a9a" stroke-width="1.3"/><path d="M6.2 6.2L9.6 9.6" stroke="#9a9a9a" stroke-width="1.5"/><path d="M9.2 3.6H12.6L10.9 5.6Z" fill="#9a9a9a"/></svg>
<div class="t " style="left:1147.52px;top:135.5px;letter-spacing:0.008px;color:#6b6b6b">All</div>
<svg style="left:1105px;top:170.3px" width="13" height="10.5" viewBox="0 0 13 10.5"><path d="M0 0H13L6.5 10.5Z" fill="#6a666c"/></svg>
<svg style="left:1124px;top:164px" width="20" height="20" viewBox="0 0 20 20"><g fill="none" stroke="#c6cace" stroke-width="1.6" stroke-linejoin="round" stroke-linecap="round"><path d="M1.4 10.2L15.4 2L17.2 3.4V17L15.4 18.4Z"/><path d="M1.6 10.2H11.2M11.2 10.2L15.8 2.6M11.2 10.2L15.8 17.8" stroke-width="1.4"/></g></svg>
<div class="t " style="left:1151.6px;top:162px;font-weight:bold;letter-spacing:0.689px;color:#b4b8be">SampleScene</div>
<svg style="left:1460.5px;top:169px" width="4" height="16" viewBox="0 0 4 16"><rect x="0.5" y="0" width="3" height="3" fill="#b0b0b0"/><rect x="0.5" y="6" width="3" height="3" fill="#b0b0b0"/><rect x="0.5" y="12" width="3" height="3" fill="#b0b0b0"/></svg>
<svg style="left:1145.5px;top:188.1px" width="20" height="22" viewBox="0 0 20 22"><g fill="none" stroke="#a8a8a8" stroke-width="1.5" stroke-linejoin="round"><path d="M9.8 1L18.6 5.4V15.8L9.8 20.6L1 15.8V5.4Z"/><path d="M1 5.4L9.8 10.2L18.6 5.4M9.8 10.2V20.6"/></g></svg>
<div class="t " style="left:1169.99px;top:185.5px;letter-spacing:0.851px;">Main Camera</div>
<svg style="left:1145.5px;top:212.1px" width="20" height="22" viewBox="0 0 20 22"><g fill="none" stroke="#a8a8a8" stroke-width="1.5" stroke-linejoin="round"><path d="M9.8 1L18.6 5.4V15.8L9.8 20.6L1 15.8V5.4Z"/><path d="M1 5.4L9.8 10.2L18.6 5.4M9.8 10.2V20.6"/></g></svg>
<div class="t " style="left:1169.99px;top:209.5px;letter-spacing:1.055px;">Directional Light</div>
<svg style="left:1145.5px;top:236.1px" width="20" height="22" viewBox="0 0 20 22"><g fill="none" stroke="#a8a8a8" stroke-width="1.5" stroke-linejoin="round"><path d="M9.8 1L18.6 5.4V15.8L9.8 20.6L1 15.8V5.4Z"/><path d="M1 5.4L9.8 10.2L18.6 5.4M9.8 10.2V20.6"/></g></svg>
<div class="t " style="left:1170.4px;top:233.5px;letter-spacing:1.08px;">Ground</div>
<svg style="left:1145.5px;top:260.1px" width="20" height="22" viewBox="0 0 20 22"><g fill="none" stroke="#a8a8a8" stroke-width="1.5" stroke-linejoin="round"><path d="M9.8 1L18.6 5.4V15.8L9.8 20.6L1 15.8V5.4Z"/><path d="M1 5.4L9.8 10.2L18.6 5.4M9.8 10.2V20.6"/></g></svg>
<div class="t " style="left:1170.38px;top:257.5px;letter-spacing:0.984px;">Stage</div>
<svg style="left:1145.5px;top:284.1px" width="20" height="22" viewBox="0 0 20 22"><g fill="none" stroke="#a8a8a8" stroke-width="1.5" stroke-linejoin="round"><path d="M9.8 1L18.6 5.4V15.8L9.8 20.6L1 15.8V5.4Z"/><path d="M1 5.4L9.8 10.2L18.6 5.4M9.8 10.2V20.6"/></g></svg>
<div class="t " style="left:1169.99px;top:281.5px;letter-spacing:1.264px;">Player</div>
<svg style="left:1126px;top:289.5px" width="13" height="10.5" viewBox="0 0 13 10.5"><path d="M0 0H13L6.5 10.5Z" fill="#5c5555"/></svg>
<svg style="left:1166.5px;top:308.1px" width="20" height="22" viewBox="0 0 20 22"><g fill="none" stroke="#a8a8a8" stroke-width="1.5" stroke-linejoin="round"><path d="M9.8 1L18.6 5.4V15.8L9.8 20.6L1 15.8V5.4Z"/><path d="M1 5.4L9.8 10.2L18.6 5.4M9.8 10.2V20.6"/></g></svg>
<div class="t " style="left:1190.89px;top:305.5px;letter-spacing:1.836px;">Head</div>
<svg style="left:1166.5px;top:332.1px" width="20" height="22" viewBox="0 0 20 22"><g fill="none" stroke="#a8a8a8" stroke-width="1.5" stroke-linejoin="round"><path d="M9.8 1L18.6 5.4V15.8L9.8 20.6L1 15.8V5.4Z"/><path d="M1 5.4L9.8 10.2L18.6 5.4M9.8 10.2V20.6"/></g></svg>
<div class="t " style="left:1190.89px;top:329.5px;letter-spacing:1.181px;">Body</div>
<svg style="left:1166.5px;top:356.1px" width="20" height="22" viewBox="0 0 20 22"><g fill="none" stroke="#5f5a5a" stroke-width="1.5" stroke-linejoin="round"><path d="M9.8 1L18.6 5.4V15.8L9.8 20.6L1 15.8V5.4Z"/><path d="M1 5.4L9.8 10.2L18.6 5.4M9.8 10.2V20.6"/></g></svg>
<div class="t " style="left:1190.89px;top:353.5px;letter-spacing:0.937px;color:#6a6464">Particle System</div>
<svg style="left:1145.5px;top:380.1px" width="20" height="22" viewBox="0 0 20 22"><g fill="none" stroke="#a8a8a8" stroke-width="1.5" stroke-linejoin="round"><path d="M9.8 1L18.6 5.4V15.8L9.8 20.6L1 15.8V5.4Z"/><path d="M1 5.4L9.8 10.2L18.6 5.4M9.8 10.2V20.6"/></g></svg>
<div class="t " style="left:1170.4px;top:377.5px;letter-spacing:1.401px;">Canvas</div>
<svg style="left:1128px;top:383.5px" width="10.5" height="13" viewBox="0 0 10.5 13"><path d="M0 0V13L10.5 6.5Z" fill="#5c5555"/></svg>
<svg style="left:1145.5px;top:404.1px" width="20" height="22" viewBox="0 0 20 22"><g fill="none" stroke="#a8a8a8" stroke-width="1.5" stroke-linejoin="round"><path d="M9.8 1L18.6 5.4V15.8L9.8 20.6L1 15.8V5.4Z"/><path d="M1 5.4L9.8 10.2L18.6 5.4M9.8 10.2V20.6"/></g></svg>
<div class="t " style="left:1169.99px;top:401.5px;letter-spacing:1.052px;">EventSystem</div>
<svg style="left:1145.5px;top:428.1px" width="20" height="22" viewBox="0 0 20 22"><g fill="none" stroke="#a8a8a8" stroke-width="1.5" stroke-linejoin="round"><path d="M9.8 1L18.6 5.4V15.8L9.8 20.6L1 15.8V5.4Z"/><path d="M1 5.4L9.8 10.2L18.6 5.4M9.8 10.2V20.6"/></g></svg>
<div class="t " style="left:1170.38px;top:425.5px;letter-spacing:0.966px;">Stage(Clone)</div>
<div class="strip" style="left:1483px;top:103px;width:489px;border-radius:5px 5px 0 0"></div>
<div class="tab" style="left:1483px;top:103px;width:123px"></div>
<div class="t " style="left:1518.59px;top:106.5px;letter-spacing:1.079px;">Project</div>
<svg style="left:1921px;top:109px" width="13" height="16" viewBox="0 0 13 16"><path d="M3.3 4.6V4.4A4.1 3.7 0 0 1 11.5 4.4V8.6" fill="none" stroke="#a0a0a0" stroke-width="1.6"/><rect x="0.8" y="8.8" width="11.4" height="5.8" fill="none" stroke="#a0a0a0" stroke-width="1.6"/></svg>
<svg style="left:1951.5px;top:110px" width="4" height="16" viewBox="0 0 4 16"><rect x="0.5" y="0" width="3" height="3" fill="#a0a0a0"/><rect x="0.5" y="6" width="3" height="3" fill="#a0a0a0"/><rect x="0.5" y="12" width="3" height="3" fill="#a0a0a0"/></svg>
<div class="ptb" style="left:1483px;top:132px;width:489px"></div>
<div class="a" style="left:1483px;top:163px;width:165px;height:1149px;background:#2d2d2d;"></div>
<div class="a" style="left:1648px;top:163px;width:1px;height:1149px;background:#1c1c1c;"></div>
<div class="a" style="left:1649px;top:163px;width:323px;height:1149px;background:#292929;"></div>
<div class="a" style="left:1649px;top:163px;width:323px;height:31px;background:#303030;"></div>
<div class="a" style="left:1649px;top:194px;width:323px;height:1px;background:#1f1f1f;"></div>
<svg style="left:1494.5px;top:110.5px" width="19" height="15" viewBox="0 0 19 15"><path d="M0 1.2Q0 0 1.2 0H7L9.2 2.4H17.2Q18.4 2.4 18.4 3.6V13.4Q18.4 14.6 17.2 14.6H1.2Q0 14.6 0 13.4Z" fill="#a0a0a0"/></svg>
<svg style="left:1494px;top:137.5px" width="18" height="18" viewBox="0 0 18 18"><path d="M9 0V18M0 9H18" stroke="#b4b4b4" stroke-width="2"/></svg>
<svg style="left:1519px;top:144px" width="10" height="6" viewBox="0 0 10 6"><path d="M0 0H10L5.0 6Z" fill="#8c8c8c"/></svg>
<div class="search" style="left:1551.5px;top:135px;width:239px"></div>
<svg style="left:1559px;top:143.5px" width="13" height="10" viewBox="0 0 13 10"><circle cx="4" cy="4" r="2.9" fill="none" stroke="#a8a8a8" stroke-width="1.3"/><path d="M6.2 6.2L9.6 9.6" stroke="#a8a8a8" stroke-width="1.5"/></svg>
<div class="a" style="left:1794.5px;top:132px;width:1.5px;height:31px;background:#1c1c1c;"></div>
<div class="a" style="left:1833.5px;top:132px;width:1.5px;height:31px;background:#1c1c1c;"></div>
<div class="a" style="left:1872.5px;top:132px;width:1.5px;height:31px;background:#1c1c1c;"></div>
<div class="a" style="left:1911.5px;top:132px;width:1.5px;height:31px;background:#1c1c1c;"></div>
<svg style="left:0px;top:0px" width="2000" height="170" viewBox="0 0 2000 170"><rect x="1806.2" y="136.8" width="7.8" height="7.8" fill="#9c9c9c"/><circle cx="1809.1" cy="150.4" r="5.3" fill="#9c9c9c" stroke="#303030" stroke-width="1"/><path d="M1818.2 141.6L1822.2 150.2H1814.4Z" fill="#9c9c9c"/><path d="M1843.4 147.7L1852.4 140.7L1857.9 140.1L1858 146.2L1849.3 154Z" fill="#9c9c9c"/><circle cx="1854.2" cy="143.2" r="1.1" fill="#303030"/><polygon points="1890.8,138.4 1893.4,144.2 1899.7,144.9 1895.0,149.2 1896.3,155.4 1890.8,152.2 1885.3,155.4 1886.6,149.2 1881.9,144.9 1888.2,144.2" fill="#6a676d"/><path d="M1920 147.2C1924 141 1935.6 141 1940.4 147.2C1935.6 153.4 1924 153.4 1920 147.2Z" fill="none" stroke="#9c9c9c" stroke-width="1.5"/><path d="M1921.4 154.6L1937.6 138.6" stroke="#9c9c9c" stroke-width="1.6"/><path d="M1930 144A3.3 3.3 0 0 1 1933 149.4" fill="none" stroke="#9c9c9c" stroke-width="1.4"/></svg>
<div class="t " style="left:1942.7px;top:135.5px;letter-spacing:-0.172px;">10</div>
<svg style="left:1488.8px;top:169.5px" width="12.5" height="10.5" viewBox="0 0 12.5 10.5"><path d="M0 0H12.5L6.25 10.5Z" fill="#5c5555"/></svg>
<svg style="left:0px;top:0px" width="1600" height="200" viewBox="0 0 1600 200"><polygon points="1519.0,165.3 1521.6,171.1 1527.8,171.7 1523.2,176.0 1524.5,182.1 1519.0,179.0 1513.5,182.1 1514.8,176.0 1510.2,171.7 1516.4,171.1" fill="#e9bb8a"/></svg>
<div class="t " style="left:1535.16px;top:162px;font-weight:bold;letter-spacing:0.87px;color:#b4b8be">Favorites</div>
<svg style="left:1531px;top:189.5px" width="19" height="19" viewBox="0 0 19 19"><circle cx="7" cy="7" r="5.7" fill="none" stroke="#a8a8a8" stroke-width="1.5"/><path d="M11.4 11.4L16.6 16.6" stroke="#a8a8a8" stroke-width="2.4" stroke-linecap="round"/></svg>
<div class="t" style="left:1555.32px;top:185.5px;width:91.18000000000006px;overflow:hidden;letter-spacing:0.876px">All Materials</div>
<svg style="left:1531px;top:213.5px" width="19" height="19" viewBox="0 0 19 19"><circle cx="7" cy="7" r="5.7" fill="none" stroke="#a8a8a8" stroke-width="1.5"/><path d="M11.4 11.4L16.6 16.6" stroke="#a8a8a8" stroke-width="2.4" stroke-linecap="round"/></svg>
<div class="t" style="left:1555.32px;top:209.5px;width:91.18000000000006px;overflow:hidden;letter-spacing:0.876px">All Models</div>
<svg style="left:1531px;top:237.5px" width="19" height="19" viewBox="0 0 19 19"><circle cx="7" cy="7" r="5.7" fill="none" stroke="#a8a8a8" stroke-width="1.5"/><path d="M11.4 11.4L16.6 16.6" stroke="#a8a8a8" stroke-width="2.4" stroke-linecap="round"/></svg>
<div class="t" style="left:1555.32px;top:233.5px;width:91.18000000000006px;overflow:hidden;letter-spacing:0.569px">All Prefabs</div>
<svg style="left:1488.8px;top:288.5px" width="12.5" height="10.5" viewBox="0 0 12.5 10.5"><path d="M0 0H12.5L6.25 10.5Z" fill="#5c5555"/></svg>
<svg style="left:1509.5px;top:286.3px" width="21" height="15" viewBox="0 0 21 15"><path d="M.8 13.6V1.8Q.8 .8 1.8 .8H6.4L8.2 2.8H15.6Q16.6 2.8 16.6 3.8V5.6" fill="none" stroke="#a8a8a8" stroke-width="1.4"/><path d="M4.6 6H20.2L16.8 14.4H.9Z" fill="#a8a8a8"/></svg>
<div class="t " style="left:1535.91px;top:281px;font-weight:bold;letter-spacing:1.261px;color:#b4b8be">Assets</div>
<div class="a" style="left:1483px;top:402px;width:165px;height:23px;background:#3e3e3e;"></div>
<svg style="left:1531px;top:310.8px" width="18" height="14" viewBox="0 0 18 14"><path d="M0 1.2Q0 0 1.2 0H6.6L8.6 2.2H16.6Q17.8 2.2 17.8 3.4V12.4Q17.8 13.6 16.6 13.6H1.2Q0 13.6 0 12.4Z" fill="#a8a8a8"/></svg>
<div class="t" style="left:1554.09px;top:304.5px;width:92.41000000000008px;overflow:hidden;letter-spacing:1.202px">Materials</div>
<svg style="left:1531px;top:334.8px" width="18" height="14" viewBox="0 0 18 14"><path d="M0 1.2Q0 0 1.2 0H6.6L8.6 2.2H16.6Q17.8 2.2 17.8 3.4V12.4Q17.8 13.6 16.6 13.6H1.2Q0 13.6 0 12.4Z" fill="#a8a8a8"/></svg>
<div class="t" style="left:1554.09px;top:328.5px;width:92.41000000000008px;overflow:hidden;letter-spacing:1.085px">Plugins</div>
<svg style="left:1512px;top:334.5px" width="10.5" height="13" viewBox="0 0 10.5 13"><path d="M0 0V13L10.5 6.5Z" fill="#5c5555"/></svg>
<svg style="left:1531px;top:358.8px" width="18" height="14" viewBox="0 0 18 14"><path d="M0 1.2Q0 0 1.2 0H6.6L8.6 2.2H16.6Q17.8 2.2 17.8 3.4V12.4Q17.8 13.6 16.6 13.6H1.2Q0 13.6 0 12.4Z" fill="#a8a8a8"/></svg>
<div class="t" style="left:1554.09px;top:352.5px;width:92.41000000000008px;overflow:hidden;letter-spacing:0.927px">Resources</div>
<svg style="left:1531px;top:382.8px" width="18" height="14" viewBox="0 0 18 14"><path d="M0 1.2Q0 0 1.2 0H6.6L8.6 2.2H16.6Q17.8 2.2 17.8 3.4V12.4Q17.8 13.6 16.6 13.6H1.2Q0 13.6 0 12.4Z" fill="#a8a8a8"/></svg>
<div class="t" style="left:1554.48px;top:376.5px;width:92.01999999999998px;overflow:hidden;letter-spacing:1.185px">Scenes</div>
<svg style="left:1512px;top:382.5px" width="10.5" height="13" viewBox="0 0 10.5 13"><path d="M0 0V13L10.5 6.5Z" fill="#5c5555"/></svg>
<svg style="left:1531px;top:406.8px" width="18" height="14" viewBox="0 0 18 14"><path d="M0 1.2Q0 0 1.2 0H6.6L8.6 2.2H16.6Q17.8 2.2 17.8 3.4V12.4Q17.8 13.6 16.6 13.6H1.2Q0 13.6 0 12.4Z" fill="#a8a8a8"/></svg>
<div class="t" style="left:1554.48px;top:400.5px;width:92.01999999999998px;overflow:hidden;letter-spacing:0.988px">Scripts</div>
<svg style="left:1491px;top:430.5px" width="10.5" height="13" viewBox="0 0 10.5 13"><path d="M0 0V13L10.5 6.5Z" fill="#5c5555"/></svg>
<svg style="left:1510px;top:430.5px" width="18" height="14" viewBox="0 0 18 14"><path d="M0 1.2Q0 0 1.2 0H6.6L8.6 2.2H16.6Q17.8 2.2 17.8 3.4V12.4Q17.8 13.6 16.6 13.6H1.2Q0 13.6 0 12.4Z" fill="#a8a8a8"/></svg>
<div class="t " style="left:1535.36px;top:425px;font-weight:bold;letter-spacing:0.923px;color:#b4b8be">Packages</div>
<div class="t " style="left:1656.52px;top:166.5px;letter-spacing:0.257px;">Assets</div>
<svg style="left:1722px;top:172px" width="9" height="14" viewBox="0 0 9 14"><path d="M1 1L7 7L1 13" fill="none" stroke="#6a666c" stroke-width="2"/></svg>
<div class="t " style="left:1738.3px;top:166.5px;font-weight:bold;letter-spacing:0.952px;color:#b4b8be">Scripts</div>
<svg style="left:1684px;top:216px" width="72" height="84" viewBox="0 0 72 84"><path d="M5 0H56L72 16V79Q72 84 67 84H5Q0 84 0 79V5Q0 0 5 0Z" fill="#c3c5c5"/><g stroke="#2c2c2c" stroke-width="7.2" fill="none"><path d="M33.5 19L26.3 69M51.2 19L44 69M16.5 36H56.5M13.5 54H53.5"/></g></svg>
<div class="t " style="left:1696.24px;top:306px;font-size:15px;letter-spacing:0.467px;color:#b8bcc0">Player</div>
<div class="strip" style="left:1976px;top:103px;width:579px;border-radius:5px 0 0 0"></div>
<div class="tab" style="left:1976px;top:103px;width:142px"></div>
<div class="t " style="left:2009.4px;top:106.5px;letter-spacing:1.089px;">Inspector</div>
<svg style="left:2506px;top:109px" width="13" height="16" viewBox="0 0 13 16"><path d="M3.3 4.6V4.4A4.1 3.7 0 0 1 11.5 4.4V8.6" fill="none" stroke="#a0a0a0" stroke-width="1.6"/><rect x="0.8" y="8.8" width="11.4" height="5.8" fill="none" stroke="#a0a0a0" stroke-width="1.6"/></svg>
<svg style="left:2537.5px;top:110px" width="4" height="16" viewBox="0 0 4 16"><rect x="0.5" y="0" width="3" height="3" fill="#a0a0a0"/><rect x="0.5" y="6" width="3" height="3" fill="#a0a0a0"/><rect x="0.5" y="12" width="3" height="3" fill="#a0a0a0"/></svg>
<div class="a" style="left:1976px;top:132px;width:579px;height:1180px;background:#2d2d2d;"></div>
<svg style="left:1988px;top:110px" width="17" height="17" viewBox="0 0 17 17"><circle cx="8.2" cy="8.2" r="7.6" fill="#a2a2a2"/><rect x="6.9" y="7" width="2.8" height="6.4" fill="#303030"/><rect x="6.9" y="3.2" width="2.8" height="2.6" fill="#303030"/></svg>
<div class="a" style="left:0;top:103px;width:1px;height:1209px;background:rgba(20,20,20,.42)"></div>
</body></html>
